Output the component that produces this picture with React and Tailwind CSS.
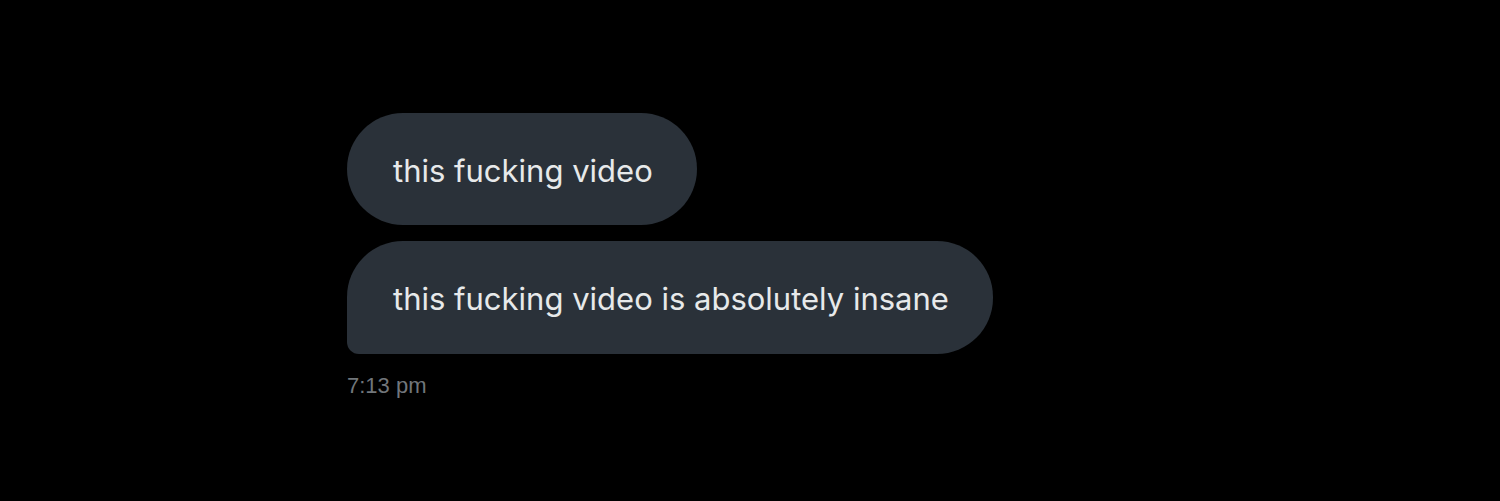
export default function App() {
  return (
    <div className="w-[1500px] h-[501px] bg-black overflow-hidden pl-[347px] pt-[113px]">
      <div className="flex flex-col items-start gap-[16px] font-['Inter','Noto_Sans',sans-serif] text-[31px] text-[#e7e9ea]">
        <div className="h-[112px] flex items-center pl-[46px] pr-[44px] pt-[4px] rounded-full bg-[#2a3139]">
          this fucking video
        </div>
        <div className="h-[113px] flex items-center pl-[46px] pr-[44px] pt-[4px] rounded-[56px] rounded-bl-[12px] bg-[#2a3139]">
          this fucking video is absolutely insane
        </div>
      </div>
      <div className="mt-[20px] text-[22px] leading-[24px] text-[#71767b] font-['Liberation_Sans',Arial,sans-serif]">
        7:13 pm
      </div>
    </div>
  );
}
